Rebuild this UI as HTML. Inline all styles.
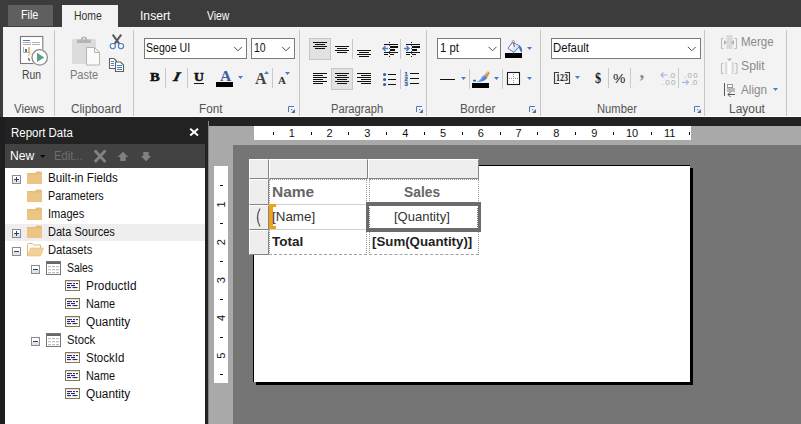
<!DOCTYPE html>
<html><head><meta charset="utf-8"><title>Report Builder</title>
<style>
*{box-sizing:border-box;margin:0;padding:0}
html,body{width:801px;height:424px;overflow:hidden;background:#3c3c3c;font-family:"Liberation Sans",sans-serif;font-size:12px;color:#222}
.a{position:absolute}
.t{position:absolute;white-space:nowrap;line-height:14px;transform-origin:0 0}
.gsep{position:absolute;top:30px;height:86px;width:1px;background:#c6c6c6}
.sep{position:absolute;width:1px;background:#c8c8c8}
.combo{position:absolute;top:38px;height:21px;background:#fff;border:1px solid #7a7a7a}
.sel{position:absolute;background:#e2e2e2;border:1px solid #c6c6c6}
.tr{position:absolute;left:5px;width:200px;height:18px}
</style></head><body>
<div class="a" style="left:8px;top:5px;width:45px;height:21px;background:#5f5f5f"></div>
<div class="a" style="left:62px;top:5px;width:56px;height:23px;background:#f3f3f3"></div>
<div class="a" style="left:3px;top:27px;width:798px;height:89px;background:#f3f3f3"></div>
<div class="a" style="left:3px;top:116px;width:798px;height:1px;background:#fff"></div>
<div class="a" style="left:0;top:117px;width:801px;height:9px;background:#222"></div>
<div class="gsep" style="left:54px"></div>
<div class="gsep" style="left:133px"></div>
<div class="gsep" style="left:299px"></div>
<div class="gsep" style="left:426px"></div>
<div class="gsep" style="left:540px"></div>
<div class="gsep" style="left:704px"></div>
<div class="gsep" style="left:786px"></div>
<div class="combo" style="left:144px;width:103px"></div>
<div class="combo" style="left:251px;width:44px"></div>
<div class="combo" style="left:437px;width:64px"></div>
<div class="combo" style="left:551px;width:150px"></div>
<div class="sel" style="left:309px;top:38px;width:22px;height:22px"></div>
<div class="sel" style="left:331px;top:68px;width:22px;height:22px"></div>
<div class="sep" style="left:165px;top:68px;height:20px"></div>
<div class="sep" style="left:187px;top:68px;height:20px"></div>
<div class="sep" style="left:272px;top:68px;height:20px"></div>
<div class="sep" style="left:352px;top:39px;height:20px"></div>
<div class="sep" style="left:400px;top:39px;height:20px"></div>
<div class="sep" style="left:400px;top:69px;height:20px"></div>
<div class="sep" style="left:469px;top:69px;height:20px"></div>
<div class="sep" style="left:502px;top:69px;height:20px"></div>
<div class="sep" style="left:608px;top:68px;height:20px"></div>
<div class="sep" style="left:630px;top:68px;height:20px"></div>
<div class="sep" style="left:678px;top:68px;height:20px"></div>
<div class="t" style="left:149.5px;top:68.4px;font:bold 13px 'Liberation Serif',serif;line-height:18px;color:#111;-webkit-text-stroke:0.5px #111;transform:scaleX(1.12)">B</div>
<div class="t" style="left:175.5px;top:68.4px;font:italic bold 13px 'Liberation Serif',serif;line-height:18px;color:#111;-webkit-text-stroke:0.5px #111;transform:skewX(-14deg) scaleX(1.2)">I</div>
<div class="t" style="left:193.5px;top:68.4px;font:bold 13px 'Liberation Serif',serif;line-height:18px;color:#111;-webkit-text-stroke:0.5px #111;transform:scaleX(1.05)">U</div><div class="a" style="left:194px;top:83px;width:10px;height:1px;background:#111"></div>
<div class="t" style="left:220px;top:66.5px;font:bold 15.5px 'Liberation Serif',serif;line-height:18px;color:#3c5fa8">A</div>
<div class="t" style="left:255px;top:69.5px;font:bold 16px 'Liberation Serif',serif;line-height:18px;color:#444">A</div>
<div class="t" style="left:278px;top:72px;font:bold 11px 'Liberation Serif',serif;line-height:16px;color:#333">A</div>
<div class="t" style="left:595.2px;top:69px;font:bold 15px 'Liberation Serif',serif;line-height:18px;color:#1a1a1a;transform:scaleX(0.82)">$</div>
<div class="t" style="left:613.3px;top:69.5px;font:13px 'Liberation Sans',sans-serif;line-height:18px;color:#1a1a1a;transform:scaleX(1.07)">%</div>
<div class="t" style="left:639.5px;top:62.8px;font:bold 19px 'Liberation Serif',serif;line-height:18px;color:#8c8c8c">,</div>
<svg class="a" style="left:0;top:0" width="801" height="117" viewBox="0 0 801 117"><path d="M234 46.8 L238 50.8 L242 46.8" fill="none" stroke="#505050" stroke-width="1"/>
<path d="M282 46.8 L286 50.8 L290 46.8" fill="none" stroke="#505050" stroke-width="1"/>
<path d="M488.5 46.8 L492.5 50.8 L496.5 46.8" fill="none" stroke="#505050" stroke-width="1"/>
<path d="M687.8 46.8 L691.8 50.8 L695.8 46.8" fill="none" stroke="#505050" stroke-width="1"/>
<path d="M238 76 h5 l-2.500 3 z" fill="#4a7cc4"/>
<path d="M527 47 h5 l-2.500 3 z" fill="#4a7cc4"/>
<path d="M461 77 h5 l-2.500 3 z" fill="#4a7cc4"/>
<path d="M494 77 h5 l-2.500 3 z" fill="#4a7cc4"/>
<path d="M527 77 h5 l-2.500 3 z" fill="#4a7cc4"/>
<path d="M575 76 h5 l-2.500 3 z" fill="#4a7cc4"/>
<path d="M773 88 h5 l-2.500 3 z" fill="#4a7cc4"/>
<rect x="20.500" y="36.500" width="22.300" height="27" fill="#fff" stroke="#7a7a7a" stroke-width="1.1"/>
<rect x="23" y="40" width="7" height="1" fill="#4a7cc4"/>
<rect x="23" y="42" width="8" height="1" fill="#b0b0b0"/><rect x="32" y="42" width="8" height="1" fill="#b0b0b0"/>
<rect x="23" y="44" width="8" height="1" fill="#b0b0b0"/><rect x="32" y="44" width="8" height="1" fill="#b0b0b0"/>
<path d="M23.500 47 v5.500 h6.500" fill="none" stroke="#b0b0b0"/>
<rect x="25" y="49" width="2" height="3" fill="#3f6fb8"/><rect x="28" y="47" width="2" height="5" fill="#ebc06a"/>
<path d="M31 53.500 q-2.500 0.500 -2.500 3" fill="none" stroke="#f0cf8a" stroke-width="1.3"/><path d="M28.500 58 l1 3" stroke="#666" stroke-width="1.4"/>
<circle cx="39.700" cy="57.400" r="8.800" fill="#f6f6f6"/><circle cx="39.700" cy="57.400" r="7.700" fill="#fff" stroke="#8a8a8a" stroke-width="1.3"/>
<path d="M37 52.800 L44.200 57.400 L37 62 z" fill="#5a9f82"/>
<rect x="72" y="39" width="24" height="25" rx="1" fill="#dcdcdc"/>
<path d="M77 43 v-3.500 h4 a3 3 0 0 1 6 0 h4 v3.500 z" fill="#b5b5b5"/><circle cx="84" cy="38.800" r="1" fill="#f0f0f0"/>
<path d="M86.500 47.500 h8 l5 5 v12.500 h-13 z" fill="#fbfbfb" stroke="#b4b4b4"/><path d="M94.500 47.500 v5 h5" fill="none" stroke="#b4b4b4"/>
<path d="M112.700 34.600 L119.300 43.800 M121.200 34.600 L114.600 43.800" stroke="#585858" stroke-width="2" fill="none"/>
<circle cx="112.800" cy="46.100" r="2.600" fill="#fafafa" stroke="#4a7cc4" stroke-width="1.1"/><circle cx="121" cy="46.100" r="2.600" fill="#fafafa" stroke="#4a7cc4" stroke-width="1.1"/>
<path d="M109.500 58.500 h4.500 l2.500 2.500 v7.500 h-7 z" fill="#fff" stroke="#606060" stroke-width="1.1"/>
<path d="M115.500 62 h5 l3 3 v6.500 h-8 z" fill="#fff" stroke="#606060" stroke-width="1.1"/>
<rect x="111" y="61" width="3" height="1" fill="#4a7cc4"/>
<rect x="111" y="63" width="3" height="1" fill="#4a7cc4"/>
<rect x="111" y="65" width="3" height="1" fill="#4a7cc4"/>
<rect x="117" y="65" width="5" height="1" fill="#4a7cc4"/>
<rect x="117" y="67" width="5" height="1" fill="#4a7cc4"/>
<rect x="117" y="69" width="5" height="1" fill="#4a7cc4"/>
<rect x="216" y="82" width="17" height="5" fill="#000"/>
<path d="M264 74 l2.500 -3 l2.500 3 z" fill="#4a7cc4"/><path d="M285 72 h5 l-2.500 3 z" fill="#4a7cc4"/>
<rect x="313" y="42" width="14" height="1" fill="#111"/><rect x="315" y="44" width="10" height="1" fill="#111"/><rect x="313" y="46" width="14" height="1" fill="#111"/><rect x="315" y="48" width="10" height="1" fill="#111"/>
<rect x="335" y="46" width="14" height="1" fill="#111"/><rect x="337" y="48" width="10" height="1" fill="#111"/><rect x="335" y="50" width="14" height="1" fill="#111"/><rect x="337" y="52" width="10" height="1" fill="#111"/>
<rect x="357" y="50" width="14" height="1" fill="#111"/><rect x="359" y="52" width="10" height="1" fill="#111"/><rect x="357" y="54" width="14" height="1" fill="#111"/><rect x="359" y="56" width="10" height="1" fill="#111"/>
<rect x="313" y="73" width="14" height="1" fill="#111"/><rect x="313" y="75" width="10" height="1" fill="#111"/><rect x="313" y="77" width="14" height="1" fill="#111"/><rect x="313" y="79" width="10" height="1" fill="#111"/><rect x="313" y="81" width="14" height="1" fill="#111"/><rect x="313" y="83" width="10" height="1" fill="#111"/>
<rect x="335" y="73" width="14" height="1" fill="#111"/><rect x="337" y="75" width="10" height="1" fill="#111"/><rect x="335" y="77" width="14" height="1" fill="#111"/><rect x="337" y="79" width="10" height="1" fill="#111"/><rect x="335" y="81" width="14" height="1" fill="#111"/><rect x="337" y="83" width="10" height="1" fill="#111"/>
<rect x="357" y="73" width="14" height="1" fill="#111"/><rect x="361" y="75" width="10" height="1" fill="#111"/><rect x="357" y="77" width="14" height="1" fill="#111"/><rect x="361" y="79" width="10" height="1" fill="#111"/><rect x="357" y="81" width="14" height="1" fill="#111"/><rect x="361" y="83" width="10" height="1" fill="#111"/>
<rect x="389" y="42" width="1" height="1" fill="#111"/><rect x="389" y="56" width="1" height="1" fill="#111"/><rect x="389" y="45" width="1" height="1" fill="#555"/><rect x="389" y="48" width="1" height="1" fill="#555"/><rect x="389" y="51" width="1" height="1" fill="#555"/><rect x="389" y="53" width="1" height="1" fill="#555"/><rect x="384" y="44" width="14" height="1" fill="#111"/><rect x="390" y="46" width="8" height="2" fill="#111"/><rect x="390" y="49" width="5" height="2" fill="#111"/><rect x="384" y="52" width="14" height="1" fill="#111"/><rect x="384" y="54" width="4" height="1" fill="#111"/><rect x="390" y="54" width="4" height="1" fill="#111"/><path d="M388 48.500 h-5 m2.500 -2.500 l-2.500 2.500 l2.500 2.500" stroke="#4a7cc4" stroke-width="1.4" fill="none"/>
<rect x="411" y="42" width="1" height="1" fill="#111"/><rect x="411" y="56" width="1" height="1" fill="#111"/><rect x="411" y="45" width="1" height="1" fill="#555"/><rect x="411" y="48" width="1" height="1" fill="#555"/><rect x="411" y="51" width="1" height="1" fill="#555"/><rect x="411" y="53" width="1" height="1" fill="#555"/><rect x="406" y="44" width="14" height="1" fill="#111"/><rect x="412" y="46" width="8" height="2" fill="#111"/><rect x="412" y="49" width="5" height="2" fill="#111"/><rect x="406" y="52" width="14" height="1" fill="#111"/><rect x="406" y="54" width="4" height="1" fill="#111"/><rect x="412" y="54" width="4" height="1" fill="#111"/><path d="M404 48.500 h5 m-2.500 -2.500 l2.500 2.500 l-2.500 2.500" stroke="#4a7cc4" stroke-width="1.4" fill="none"/>
<circle cx="384.600" cy="74.5" r="1.600" fill="#3c5fa8"/><rect x="388" y="74" width="8" height="1" fill="#111"/>
<circle cx="384.600" cy="79.5" r="1.600" fill="#3c5fa8"/><rect x="388" y="79" width="8" height="1" fill="#111"/>
<circle cx="384.600" cy="84.5" r="1.600" fill="#3c5fa8"/><rect x="388" y="84" width="8" height="1" fill="#111"/>
<rect x="410" y="73" width="9" height="1" fill="#111"/>
<rect x="410" y="78" width="9" height="1" fill="#111"/>
<rect x="410" y="83" width="9" height="1" fill="#111"/>
<text x="404.500" y="76" font-family="Liberation Sans" font-size="6" font-weight="bold" fill="#3457a6" stroke="#3457a6" stroke-width="0.250">1</text>
<text x="404.500" y="81" font-family="Liberation Sans" font-size="6" font-weight="bold" fill="#3457a6" stroke="#3457a6" stroke-width="0.250">2</text>
<text x="404.500" y="86" font-family="Liberation Sans" font-size="6" font-weight="bold" fill="#3457a6" stroke="#3457a6" stroke-width="0.250">3</text>
<rect x="505" y="53" width="17" height="5" fill="#000"/>
<defs><linearGradient id="bk" x1="0" y1="0" x2="1" y2="1"><stop offset="0.35" stop-color="#fff"/><stop offset="1" stop-color="#9dbbe6"/></linearGradient></defs><path d="M508 48.300 L512.500 42.200 L519.800 46 L514 52.500 z" fill="url(#bk)" stroke="#5277b8" stroke-width="1"/><path d="M513.200 42.500 L514.500 47" stroke="#777" stroke-width="1.3"/><circle cx="513.300" cy="41.800" r="1.300" fill="none" stroke="#888" stroke-width="0.800"/><path d="M519 45.500 q3.500 1 3 7 q-3 -1.500 -3 -7z" fill="#3a6fc4"/>
<rect x="440" y="79" width="15" height="1" fill="#111"/>
<rect x="472" y="83" width="17" height="5" fill="#000"/>
<rect x="473" y="79.800" width="3" height="1.700" rx="0.500" fill="#2f5fc0"/><path d="M476.500 81.600 Q480 81 481.500 77.500 Q483 74.500 486 75.300 L487.300 78 Q484 82.300 476.500 81.600z" fill="#4f82d8"/><path d="M478.500 81 Q481.500 80 482.800 77 Q484 75.500 485.500 76" fill="none" stroke="#9bbcf0" stroke-width="0.900"/><path d="M484.300 75 L487.300 71.600 Q489.700 71 489.500 73.600 L487.200 77.600 z" fill="#d39a3c"/><path d="M485.500 74.300 L487.800 72" stroke="#f3dfa8" stroke-width="1"/>
<rect x="507.500" y="72.500" width="12" height="12" fill="#fff" stroke="#1a1a1a" stroke-width="1.1"/>
<rect x="509" y="78" width="1" height="1" fill="#909090"/><rect x="513" y="74" width="1" height="1" fill="#909090"/>
<rect x="511" y="78" width="1" height="1" fill="#909090"/><rect x="513" y="76" width="1" height="1" fill="#909090"/>
<rect x="513" y="78" width="1" height="1" fill="#909090"/><rect x="513" y="78" width="1" height="1" fill="#909090"/>
<rect x="515" y="78" width="1" height="1" fill="#909090"/><rect x="513" y="80" width="1" height="1" fill="#909090"/>
<rect x="517" y="78" width="1" height="1" fill="#909090"/><rect x="513" y="82" width="1" height="1" fill="#909090"/>
<path d="M559 72.500 h-4.500 v11 h4.500 M565 72.500 h4.500 v11 h-4.500" fill="none" stroke="#3a3a3a" stroke-width="1.1"/>
<text x="556" y="81.300" font-family="Liberation Serif" font-size="9.300" font-weight="bold" fill="#222" textLength="12" lengthAdjust="spacingAndGlyphs">123</text>
<text x="668.500" y="77.700" font-family="Liberation Sans" font-size="8" fill="#a8a8a8">.0</text><text x="661.500" y="85" font-family="Liberation Sans" font-size="8" fill="#a8a8a8" textLength="14">.00</text>
<path d="M667.500 75 h-6.500 m2.500 -2.500 l-2.500 2.500 l2.500 2.500" stroke="#a4b8e0" stroke-width="1.2" fill="none"/>
<text x="683.800" y="77.700" font-family="Liberation Sans" font-size="8" fill="#a8a8a8" textLength="14">.00</text><text x="690.500" y="85" font-family="Liberation Sans" font-size="8" fill="#a8a8a8">.0</text>
<path d="M682 82.300 h6.500 m-2.500 -2.500 l2.500 2.500 l-2.500 2.500" stroke="#a4b8e0" stroke-width="1.2" fill="none"/>
<path d="M288.5 112 v-5.500 h5.500" fill="none" stroke="#4f7db3"/><path d="M295 109 v4 h-4 z" fill="#4473ab"/><rect x="291" y="109" width="1.200" height="1.200" fill="#4f7db3"/>
<path d="M416.5 112 v-5.500 h5.500" fill="none" stroke="#4f7db3"/><path d="M423 109 v4 h-4 z" fill="#4473ab"/><rect x="419" y="109" width="1.200" height="1.200" fill="#4f7db3"/>
<path d="M529.5 112 v-5.500 h5.500" fill="none" stroke="#4f7db3"/><path d="M536 109 v4 h-4 z" fill="#4473ab"/><rect x="532" y="109" width="1.200" height="1.200" fill="#4f7db3"/>
<path d="M694.5 112 v-5.500 h5.500" fill="none" stroke="#4f7db3"/><path d="M701 109 v4 h-4 z" fill="#4473ab"/><rect x="697" y="109" width="1.200" height="1.200" fill="#4f7db3"/>
<path d="M723.500 38.500 h-2 v10 h2 M734.500 38.500 h2 v10 h-2" fill="none" stroke="#b8b8b8"/><rect x="726.500" y="35" width="6" height="14" fill="#dadada"/><path d="M727 42.500 l-3 -2.500 v5z M731 42.500 l3 -2.500 v5z" fill="#b4b4b4"/>
<path d="M723.500 63.500 h-2 v10 h2 M735 63.500 h2 v10 h-2" fill="none" stroke="#b8b8b8"/><rect x="725" y="62" width="2.500" height="12" fill="#dcdcdc"/><rect x="727.500" y="62" width="4" height="12" fill="#fbfbfb"/><rect x="731.500" y="62" width="2.500" height="12" fill="#dcdcdc"/><path d="M727 58.500 h5 l-2.500 2.800z" fill="#b8b8b8"/>
<path d="M724.500 83 v13" stroke="#555"/><rect x="727.500" y="84.500" width="5" height="3" fill="#fff" stroke="#999"/><rect x="727" y="88" width="8" height="4" fill="#bbb"/><path d="M735 94.500 h-7 m2.500 -2.500 l-2.500 2.500 l2.500 2.500" fill="none" stroke="#555"/></svg>
<div class="a" style="left:0;top:117px;width:5px;height:307px;background:#1e1e1e"></div>
<div class="a" style="left:5px;top:117px;width:200px;height:27px;background:#222"></div>
<div class="a" style="left:5px;top:144px;width:200px;height:24px;background:#424242"></div>
<div class="a" style="left:5px;top:168px;width:200px;height:256px;background:#fff"></div>
<div class="a" style="left:205px;top:117px;width:3px;height:307px;background:#222"></div>
<div class="a" style="left:208px;top:121px;width:1px;height:303px;background:#858585"></div>
<svg class="a" style="left:188px;top:126px" width="12" height="12"><path d="M2.200 2.700 L10 9.500 M10 2.700 L2.200 9.500" stroke="#fff" stroke-width="2"/></svg>
<svg class="a" style="left:40px;top:155px" width="6" height="4"><path d="M0 0 h5.500 l-2.750 3z" fill="#0a0a0a"/></svg>
<svg class="a" style="left:92px;top:149px" width="16" height="14"><path d="M2.800 1.500 L13.400 13 M13.400 1.500 L2.800 13" stroke="#828282" stroke-width="2.800"/></svg>
<svg class="a" style="left:117px;top:151px" width="12" height="12"><path d="M6 0.800 L11.200 6 H8.700 V10 H3.300 V6 H0.800z" fill="#808080"/></svg>
<svg class="a" style="left:140px;top:150px" width="12" height="12"><path d="M6 11.200 L11.200 6 H8.700 V2 H3.300 V6 H0.800z" fill="#808080"/></svg>
<div class="tr" style="top:169px"><svg class="a" style="left:7px;top:6px" width="9" height="9"><rect x="0.500" y="0.500" width="8" height="8" fill="#fff" stroke="#8c8c8c"/><rect x="1" y="5" width="7" height="3" fill="#dfe3ea"/><path d="M2 4.500 h5" stroke="#2a3f7a"/><path d="M4.500 2 v5" stroke="#2a3f7a"/></svg><svg class="a" style="left:22px;top:2px" width="16" height="14"><path d="M15 2 q0 -1.500 -1.500 -1.500 h-4 l-1.500 1.500 h-7.500 q-0.500 0 -0.500 0.500 v10.500 h15z" fill="#e6bc78"/><path d="M0 3.500 h15 v9.500 h-15z" fill="#ecc584"/></svg></div>
<div class="tr" style="top:187px"><svg class="a" style="left:22px;top:2px" width="16" height="14"><path d="M15 2 q0 -1.500 -1.500 -1.500 h-4 l-1.500 1.500 h-7.500 q-0.500 0 -0.500 0.500 v10.500 h15z" fill="#e6bc78"/><path d="M0 3.500 h15 v9.500 h-15z" fill="#ecc584"/></svg></div>
<div class="tr" style="top:205px"><svg class="a" style="left:22px;top:2px" width="16" height="14"><path d="M15 2 q0 -1.500 -1.500 -1.500 h-4 l-1.500 1.500 h-7.500 q-0.500 0 -0.500 0.500 v10.500 h15z" fill="#e6bc78"/><path d="M0 3.500 h15 v9.500 h-15z" fill="#ecc584"/></svg></div>
<div class="a" style="left:5px;top:224px;width:200px;height:17px;background:#eeeeee"></div>
<div class="tr" style="top:223px"><svg class="a" style="left:7px;top:6px" width="9" height="9"><rect x="0.500" y="0.500" width="8" height="8" fill="#fff" stroke="#8c8c8c"/><rect x="1" y="5" width="7" height="3" fill="#dfe3ea"/><path d="M2 4.500 h5" stroke="#2a3f7a"/><path d="M4.500 2 v5" stroke="#2a3f7a"/></svg><svg class="a" style="left:22px;top:2px" width="16" height="14"><path d="M15 2 q0 -1.500 -1.500 -1.500 h-4 l-1.500 1.500 h-7.500 q-0.500 0 -0.500 0.500 v10.500 h15z" fill="#e6bc78"/><path d="M0 3.500 h15 v9.500 h-15z" fill="#ecc584"/></svg></div>
<div class="tr" style="top:241px"><svg class="a" style="left:7px;top:6px" width="9" height="9"><rect x="0.500" y="0.500" width="8" height="8" fill="#fff" stroke="#8c8c8c"/><rect x="1" y="5" width="7" height="3" fill="#dfe3ea"/><path d="M2 4.500 h5" stroke="#2a3f7a"/></svg><svg class="a" style="left:22px;top:2px" width="17" height="14"><path d="M0.500 13 v-11.500 q0 -1 1 -1 h4 l1.500 1.500 h6.500 v3" fill="#fff" stroke="#e3b76d"/><path d="M0.500 13 l3 -8 h13 l-3 8z" fill="#f3d198" stroke="#e9be76" stroke-width="0.600"/></svg></div>
<div class="tr" style="top:259px"><svg class="a" style="left:26px;top:6px" width="9" height="9"><rect x="0.500" y="0.500" width="8" height="8" fill="#fff" stroke="#8c8c8c"/><rect x="1" y="5" width="7" height="3" fill="#dfe3ea"/><path d="M2 4.500 h5" stroke="#2a3f7a"/></svg><svg class="a" style="left:41px;top:2px" width="16" height="15"><rect x="0.500" y="0.500" width="14" height="13" fill="#fff" stroke="#777"/><rect x="1" y="1" width="13" height="2" fill="#666"/><rect x="2" y="5" width="3" height="1.200" fill="#bdbdbd"/><rect x="6" y="5" width="3" height="1.200" fill="#bdbdbd"/><rect x="10" y="5" width="3" height="1.200" fill="#bdbdbd"/><rect x="2" y="8" width="3" height="1.200" fill="#bdbdbd"/><rect x="6" y="8" width="3" height="1.200" fill="#bdbdbd"/><rect x="10" y="8" width="3" height="1.200" fill="#bdbdbd"/><rect x="2" y="11" width="3" height="1.200" fill="#bdbdbd"/><rect x="6" y="11" width="3" height="1.200" fill="#bdbdbd"/><rect x="10" y="11" width="3" height="1.200" fill="#bdbdbd"/></svg></div>
<div class="tr" style="top:277px"><svg class="a" style="left:60px;top:3px" width="16" height="12"><rect x="0.500" y="0.500" width="14" height="10" fill="#fffaf0" stroke="#85775c"/><rect x="1" y="1" width="13" height="1" fill="#e9dcc0"/><rect x="2" y="3" width="5" height="1.100" fill="#232a8c"/><rect x="8" y="3" width="2" height="1.100" fill="#232a8c"/><rect x="11" y="3" width="2" height="1.100" fill="#232a8c"/><rect x="2" y="5" width="3" height="1.100" fill="#232a8c"/><rect x="6" y="5" width="4" height="1.100" fill="#232a8c"/><rect x="2" y="7" width="4" height="1.100" fill="#232a8c"/><rect x="7.500" y="7" width="5" height="1.100" fill="#232a8c"/></svg></div>
<div class="tr" style="top:295px"><svg class="a" style="left:60px;top:3px" width="16" height="12"><rect x="0.500" y="0.500" width="14" height="10" fill="#fffaf0" stroke="#85775c"/><rect x="1" y="1" width="13" height="1" fill="#e9dcc0"/><rect x="2" y="3" width="5" height="1.100" fill="#232a8c"/><rect x="8" y="3" width="2" height="1.100" fill="#232a8c"/><rect x="11" y="3" width="2" height="1.100" fill="#232a8c"/><rect x="2" y="5" width="3" height="1.100" fill="#232a8c"/><rect x="6" y="5" width="4" height="1.100" fill="#232a8c"/><rect x="2" y="7" width="4" height="1.100" fill="#232a8c"/><rect x="7.500" y="7" width="5" height="1.100" fill="#232a8c"/></svg></div>
<div class="tr" style="top:313px"><svg class="a" style="left:60px;top:3px" width="16" height="12"><rect x="0.500" y="0.500" width="14" height="10" fill="#fffaf0" stroke="#85775c"/><rect x="1" y="1" width="13" height="1" fill="#e9dcc0"/><rect x="2" y="3" width="5" height="1.100" fill="#232a8c"/><rect x="8" y="3" width="2" height="1.100" fill="#232a8c"/><rect x="11" y="3" width="2" height="1.100" fill="#232a8c"/><rect x="2" y="5" width="3" height="1.100" fill="#232a8c"/><rect x="6" y="5" width="4" height="1.100" fill="#232a8c"/><rect x="2" y="7" width="4" height="1.100" fill="#232a8c"/><rect x="7.500" y="7" width="5" height="1.100" fill="#232a8c"/></svg></div>
<div class="tr" style="top:331px"><svg class="a" style="left:26px;top:6px" width="9" height="9"><rect x="0.500" y="0.500" width="8" height="8" fill="#fff" stroke="#8c8c8c"/><rect x="1" y="5" width="7" height="3" fill="#dfe3ea"/><path d="M2 4.500 h5" stroke="#2a3f7a"/></svg><svg class="a" style="left:41px;top:2px" width="16" height="15"><rect x="0.500" y="0.500" width="14" height="13" fill="#fff" stroke="#777"/><rect x="1" y="1" width="13" height="2" fill="#666"/><rect x="2" y="5" width="3" height="1.200" fill="#bdbdbd"/><rect x="6" y="5" width="3" height="1.200" fill="#bdbdbd"/><rect x="10" y="5" width="3" height="1.200" fill="#bdbdbd"/><rect x="2" y="8" width="3" height="1.200" fill="#bdbdbd"/><rect x="6" y="8" width="3" height="1.200" fill="#bdbdbd"/><rect x="10" y="8" width="3" height="1.200" fill="#bdbdbd"/><rect x="2" y="11" width="3" height="1.200" fill="#bdbdbd"/><rect x="6" y="11" width="3" height="1.200" fill="#bdbdbd"/><rect x="10" y="11" width="3" height="1.200" fill="#bdbdbd"/></svg></div>
<div class="tr" style="top:349px"><svg class="a" style="left:60px;top:3px" width="16" height="12"><rect x="0.500" y="0.500" width="14" height="10" fill="#fffaf0" stroke="#85775c"/><rect x="1" y="1" width="13" height="1" fill="#e9dcc0"/><rect x="2" y="3" width="5" height="1.100" fill="#232a8c"/><rect x="8" y="3" width="2" height="1.100" fill="#232a8c"/><rect x="11" y="3" width="2" height="1.100" fill="#232a8c"/><rect x="2" y="5" width="3" height="1.100" fill="#232a8c"/><rect x="6" y="5" width="4" height="1.100" fill="#232a8c"/><rect x="2" y="7" width="4" height="1.100" fill="#232a8c"/><rect x="7.500" y="7" width="5" height="1.100" fill="#232a8c"/></svg></div>
<div class="tr" style="top:367px"><svg class="a" style="left:60px;top:3px" width="16" height="12"><rect x="0.500" y="0.500" width="14" height="10" fill="#fffaf0" stroke="#85775c"/><rect x="1" y="1" width="13" height="1" fill="#e9dcc0"/><rect x="2" y="3" width="5" height="1.100" fill="#232a8c"/><rect x="8" y="3" width="2" height="1.100" fill="#232a8c"/><rect x="11" y="3" width="2" height="1.100" fill="#232a8c"/><rect x="2" y="5" width="3" height="1.100" fill="#232a8c"/><rect x="6" y="5" width="4" height="1.100" fill="#232a8c"/><rect x="2" y="7" width="4" height="1.100" fill="#232a8c"/><rect x="7.500" y="7" width="5" height="1.100" fill="#232a8c"/></svg></div>
<div class="tr" style="top:385px"><svg class="a" style="left:60px;top:3px" width="16" height="12"><rect x="0.500" y="0.500" width="14" height="10" fill="#fffaf0" stroke="#85775c"/><rect x="1" y="1" width="13" height="1" fill="#e9dcc0"/><rect x="2" y="3" width="5" height="1.100" fill="#232a8c"/><rect x="8" y="3" width="2" height="1.100" fill="#232a8c"/><rect x="11" y="3" width="2" height="1.100" fill="#232a8c"/><rect x="2" y="5" width="3" height="1.100" fill="#232a8c"/><rect x="6" y="5" width="4" height="1.100" fill="#232a8c"/><rect x="2" y="7" width="4" height="1.100" fill="#232a8c"/><rect x="7.500" y="7" width="5" height="1.100" fill="#232a8c"/></svg></div>
<div class="a" style="left:209px;top:126px;width:592px;height:298px;background:#a9a9a9"></div>
<div class="a" style="left:233px;top:145px;width:568px;height:279px;background:#757575"></div>
<div class="a" style="left:254px;top:126px;width:437px;height:14px;background:#fff"></div>
<div class="a" style="left:214px;top:166px;width:14px;height:217px;background:#fff"></div>
<div class="a" style="left:256px;top:168px;width:437px;height:217px;background:#000"></div>
<div class="a" style="left:253px;top:165px;width:437px;height:217px;background:#fff;border-left:1px solid #000;border-top:1px solid #000"></div>
<svg class="a" style="left:254px;top:126px" width="437" height="14"><rect x="19" y="6" width="1" height="3" fill="#111"/><rect x="57" y="6" width="1" height="3" fill="#111"/><text x="37.8" y="11.200" font-family="Liberation Sans" font-size="11" fill="#111" text-anchor="middle">1</text><rect x="94" y="6" width="1" height="3" fill="#111"/><text x="75.6" y="11.200" font-family="Liberation Sans" font-size="11" fill="#111" text-anchor="middle">2</text><rect x="132" y="6" width="1" height="3" fill="#111"/><text x="113.4" y="11.200" font-family="Liberation Sans" font-size="11" fill="#111" text-anchor="middle">3</text><rect x="170" y="6" width="1" height="3" fill="#111"/><text x="151.2" y="11.200" font-family="Liberation Sans" font-size="11" fill="#111" text-anchor="middle">4</text><rect x="208" y="6" width="1" height="3" fill="#111"/><text x="189.0" y="11.200" font-family="Liberation Sans" font-size="11" fill="#111" text-anchor="middle">5</text><rect x="246" y="6" width="1" height="3" fill="#111"/><text x="226.8" y="11.200" font-family="Liberation Sans" font-size="11" fill="#111" text-anchor="middle">6</text><rect x="283" y="6" width="1" height="3" fill="#111"/><text x="264.6" y="11.200" font-family="Liberation Sans" font-size="11" fill="#111" text-anchor="middle">7</text><rect x="321" y="6" width="1" height="3" fill="#111"/><text x="302.4" y="11.200" font-family="Liberation Sans" font-size="11" fill="#111" text-anchor="middle">8</text><rect x="359" y="6" width="1" height="3" fill="#111"/><text x="340.2" y="11.200" font-family="Liberation Sans" font-size="11" fill="#111" text-anchor="middle">9</text><rect x="397" y="6" width="1" height="3" fill="#111"/><text x="378.0" y="11.200" font-family="Liberation Sans" font-size="11" fill="#111" text-anchor="middle">10</text><rect x="435" y="6" width="1" height="3" fill="#111"/><text x="415.7" y="11.200" font-family="Liberation Sans" font-size="11" fill="#111" text-anchor="middle">11</text></svg>
<svg class="a" style="left:214px;top:166px" width="14" height="217"><rect x="6" y="19" width="3" height="1" fill="#111"/><rect x="6" y="57" width="3" height="1" fill="#111"/><text transform="translate(10.500 38.5) rotate(-90)" font-family="Liberation Sans" font-size="11" fill="#111" text-anchor="middle">1</text><rect x="6" y="95" width="3" height="1" fill="#111"/><text transform="translate(10.500 76.3) rotate(-90)" font-family="Liberation Sans" font-size="11" fill="#111" text-anchor="middle">2</text><rect x="6" y="133" width="3" height="1" fill="#111"/><text transform="translate(10.500 114.1) rotate(-90)" font-family="Liberation Sans" font-size="11" fill="#111" text-anchor="middle">3</text><rect x="6" y="171" width="3" height="1" fill="#111"/><text transform="translate(10.500 151.9) rotate(-90)" font-family="Liberation Sans" font-size="11" fill="#111" text-anchor="middle">4</text><rect x="6" y="208" width="3" height="1" fill="#111"/><text transform="translate(10.500 189.7) rotate(-90)" font-family="Liberation Sans" font-size="11" fill="#111" text-anchor="middle">5</text></svg>
<div class="a" style="left:249px;top:159px;width:230px;height:96px;background:#fff"></div>
<div class="a" style="left:249px;top:159px;width:20px;height:20px;background:#eeeeee;border-left:1px solid #fff;border-top:1px solid #fff;border-right:1px solid #858585;border-bottom:1px solid #858585"></div>
<div class="a" style="left:269px;top:159px;width:99px;height:20px;background:#eeeeee;border-left:1px solid #fff;border-top:1px solid #fff;border-right:1px solid #858585;border-bottom:1px solid #858585"></div>
<div class="a" style="left:368px;top:159px;width:111px;height:20px;background:#eeeeee;border-left:1px solid #fff;border-top:1px solid #fff;border-right:1px solid #858585;border-bottom:1px solid #858585"></div>
<div class="a" style="left:249px;top:179px;width:20px;height:26px;background:#eeeeee;border-left:1px solid #fff;border-top:1px solid #fff;border-right:1px solid #858585;border-bottom:1px solid #858585"></div>
<div class="a" style="left:249px;top:205px;width:20px;height:25px;background:#eeeeee;border-left:1px solid #fff;border-top:1px solid #fff;border-right:1px solid #858585;border-bottom:1px solid #858585"></div>
<div class="a" style="left:249px;top:230px;width:20px;height:25px;background:#eeeeee;border-left:1px solid #fff;border-top:1px solid #fff;border-right:1px solid #858585;border-bottom:1px solid #858585"></div>
<div class="a" style="left:269px;top:179px;width:98px;height:26px;border:1px dotted #999"></div>
<div class="a" style="left:369px;top:179px;width:110px;height:26px;border:1px dotted #999"></div>
<div class="a" style="left:269px;top:204px;width:98px;height:26px;border:1px dotted #999;border-top:1px solid #d0d0d0"></div>
<div class="a" style="left:269px;top:229px;width:98px;height:26px;border:1px dotted #999;border-top:1px solid #d0d0d0;border-bottom:1px dashed #a0a0a0"></div>
<div class="a" style="left:369px;top:229px;width:110px;height:26px;border:1px dotted #999;border-bottom:1px dashed #a0a0a0"></div>
<div class="a" style="left:366px;top:202px;width:115px;height:30px;border:4px solid #6b6b6b;background:#fff"></div>
<div class="a" style="left:369px;top:206px;width:109px;height:22px;border-left:1px dotted #fff;border-right:1px dotted #fff"></div>
<div class="a" style="left:269px;top:204px;width:7px;height:25px;border-left:4px solid #eca414;border-top:3px solid #eca414;border-bottom:3px solid #eca414"></div>
<svg class="a" style="left:254px;top:207px" width="8" height="21"><path d="M6 1.500 Q1 10.500 6 19.500" fill="none" stroke="#5a5a5a" stroke-width="1.3"/></svg>
<div class="t" id="tFile" style="left:20.65px;top:8px;color:#fff;transform:scaleX(0.8981)">File</div>
<div class="t" id="tHome" style="left:74.37px;top:9px;color:#333;transform:scaleX(0.8708)">Home</div>
<div class="t" id="tInsert" style="left:139.77px;top:9px;color:#fff;transform:scaleX(1.0121)">Insert</div>
<div class="t" id="tView" style="left:207.38px;top:9px;color:#fff;transform:scaleX(0.8602)">View</div>
<div class="t" id="tRun" style="left:21.88px;top:68px;color:#444;transform:scaleX(0.8620)">Run</div>
<div class="t" id="tPaste" style="left:69.64px;top:68px;color:#7a7a7a;transform:scaleX(0.9214)">Paste</div>
<div class="t" id="lViews" style="left:14.32px;top:102px;color:#555;transform:scaleX(0.9489)">Views</div>
<div class="t" id="lClip" style="left:70.59px;top:102px;color:#555;transform:scaleX(0.9816)">Clipboard</div>
<div class="t" id="lFont" style="left:198.59px;top:102px;color:#555;transform:scaleX(0.9818)">Font</div>
<div class="t" id="lPara" style="left:330.63px;top:102px;color:#555;transform:scaleX(0.9297)">Paragraph</div>
<div class="t" id="lBorder" style="left:459.79px;top:102px;color:#555;transform:scaleX(0.9823)">Border</div>
<div class="t" id="lNumber" style="left:596.83px;top:102px;color:#555;transform:scaleX(0.9340)">Number</div>
<div class="t" id="lLayout" style="left:728.58px;top:102px;color:#555;transform:scaleX(0.9962)">Layout</div>
<div class="t" id="cFont" style="left:146.17px;top:41px;color:#111;transform:scaleX(0.8813)">Segoe UI</div>
<div class="t" id="cSize" style="left:254.37px;top:41px;color:#111;transform:scaleX(0.8742)">10</div>
<div class="t" id="cPt" style="left:440.12px;top:41px;color:#111;transform:scaleX(0.9432)">1 pt</div>
<div class="t" id="cDef" style="left:553.12px;top:41px;color:#111;transform:scaleX(0.9438)">Default</div>
<div class="t" id="tMerge" style="left:740.61px;top:35px;color:#8a8a8a;transform:scaleX(0.9578)">Merge</div>
<div class="t" id="tSplit" style="left:740.57px;top:59px;color:#8a8a8a;transform:scaleX(1.0158)">Split</div>
<div class="t" id="tAlign" style="left:740.60px;top:83px;color:#8a8a8a;transform:scaleX(0.9764)">Align</div>
<div class="t" id="pTitle" style="left:10.61px;top:126px;color:#fff;transform:scaleX(0.9548)">Report Data</div>
<div class="t" id="pNew" style="left:9.78px;top:149px;color:#fff;transform:scaleX(1.0068)">New</div>
<div class="t" id="pEdit" style="left:53.83px;top:149px;color:#6e6e6e;transform:scaleX(0.9311)">Edit...</div>
<div class="t" id="xName" style="left:271.67px;top:185px;font-size:15px;font-weight:bold;color:#666;transform:scaleX(1.0337)">Name</div>
<div class="t" id="xSales" style="left:404.37px;top:185px;font-size:15px;font-weight:bold;color:#666;transform:scaleX(0.9200)">Sales</div>
<div class="t" id="xName2" style="left:271.60px;top:209.5px;font-size:13px;color:#333;transform:scaleX(1.0294)">[Name]</div>
<div class="t" id="xQty" style="left:393.82px;top:209.5px;font-size:13px;color:#333;transform:scaleX(1.0024)">[Quantity]</div>
<div class="t" id="xTotal" style="left:272.39px;top:235px;font-size:13px;font-weight:bold;color:#222;transform:scaleX(1.0412)">Total</div>
<div class="t" id="xSum" style="left:372.00px;top:235px;font-size:13px;font-weight:bold;color:#222;transform:scaleX(1.0208)">[Sum(Quantity)]</div>
<div class="t" id="r0" style="left:47.80px;top:171px;color:#111;transform:scaleX(0.9703)">Built-in Fields</div>
<div class="t" id="r1" style="left:47.85px;top:189px;color:#111;transform:scaleX(0.8978)">Parameters</div>
<div class="t" id="r2" style="left:47.84px;top:207px;color:#111;transform:scaleX(0.9196)">Images</div>
<div class="t" id="r3" style="left:47.84px;top:225px;color:#111;transform:scaleX(0.9201)">Data Sources</div>
<div class="t" id="r4" style="left:47.83px;top:243px;color:#111;transform:scaleX(0.9354)">Datasets</div>
<div class="t" id="r5" style="left:66.77px;top:261px;color:#111;transform:scaleX(0.8688)">Sales</div>
<div class="t" id="r6" style="left:85.69px;top:279px;color:#111;transform:scaleX(0.9856)">ProductId</div>
<div class="t" id="r7" style="left:85.75px;top:297px;color:#111;transform:scaleX(0.9051)">Name</div>
<div class="t" id="r8" style="left:85.69px;top:315px;color:#111;transform:scaleX(0.9881)">Quantity</div>
<div class="t" id="r9" style="left:66.72px;top:333px;color:#111;transform:scaleX(0.9388)">Stock</div>
<div class="t" id="r10" style="left:85.71px;top:351px;color:#111;transform:scaleX(0.9566)">StockId</div>
<div class="t" id="r11" style="left:85.75px;top:369px;color:#111;transform:scaleX(0.9051)">Name</div>
<div class="t" id="r12" style="left:85.69px;top:387px;color:#111;transform:scaleX(0.9881)">Quantity</div>
</body></html>
